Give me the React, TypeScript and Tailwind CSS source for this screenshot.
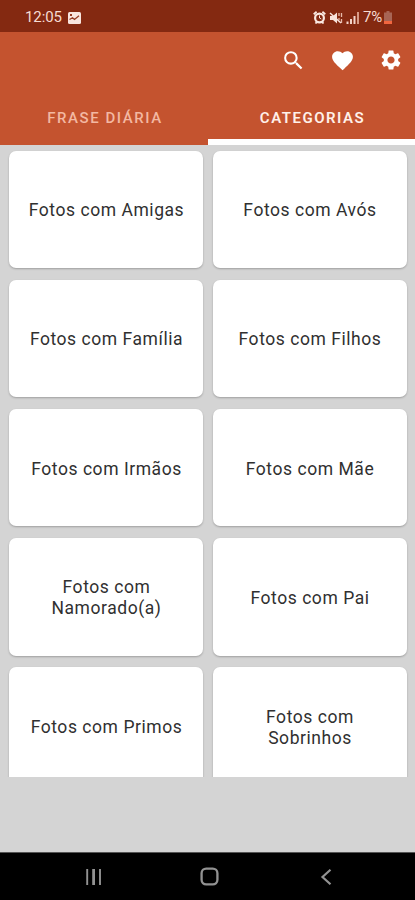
import { MdFavorite, MdSearch, MdSettings } from "react-icons/md";

const categories = [
  "Fotos com Amigas",
  "Fotos com Avós",
  "Fotos com Família",
  "Fotos com Filhos",
  "Fotos com Irmãos",
  "Fotos com Mãe",
  "Fotos com Namorado(a)",
  "Fotos com Pai",
  "Fotos com Primos",
  "Fotos com Sobrinhos",
];

function StatusBar() {
  return (
    <div className="flex h-8 items-center bg-[#842911] pt-[3px] pr-[23px] pl-[25px] text-[#f6dcd3]">
      <span className="w-[38px] text-[15px] leading-none whitespace-nowrap tracking-[-0.1px]">12:05</span>
      <svg className="ml-[5px] h-3 w-[13px]" viewBox="0 0 13 12">
        <rect width="13" height="12" rx="1.5" fill="#f8e5de" />
        <path d="M1.5 7.5l3-1.8 2 1.8 4.5-3.8" fill="none" stroke="#943b23" strokeWidth="1.3" />
        <path d="M2 2h2v2H2z" fill="#943b23" />
      </svg>
      <div className="ml-auto flex items-center">
        <svg className="h-[13px] w-[13px]" viewBox="0 0 13 13" fill="none" stroke="#fae8e1">
          <circle cx="6.5" cy="7" r="4.4" strokeWidth="2.2" />
          <path d="M.7 3.2L3.6.8M9.4.8l2.9 2.4M2.5 12.5l1.3-1.5M10.5 12.5L9.2 11" strokeWidth="1.8" />
          <path d="M6.5 4.5V7l1.8 1" strokeWidth="1" />
        </svg>
        <svg className="ml-[3px] h-3 w-[14px]" viewBox="0 0 14 12">
          <path d="M1 4h3l4-3.5v11L4 8H1z" fill="#f8e3dc" />
          <path d="M1 1l11 10" stroke="#f8e3dc" strokeWidth="1.5" />
          <path d="M10 1v3M10 6v2M12.5 1v4M12.5 7v4" stroke="#e6b9aa" strokeWidth="1.3" />
        </svg>
        <svg className="ml-[3px] h-3 w-[14px]" viewBox="0 0 14 12">
          <path d="M1.5 9.5V12M5 7V12M8.5 4V12" stroke="#f3d3c9" strokeWidth="2" />
          <path d="M12 0v12" stroke="#d99c88" strokeWidth="2" />
        </svg>
        <span className="ml-[3px] w-[20px] text-[15px] leading-none tracking-[-0.3px]">7%</span>
        <svg className="ml-px h-[13px] w-[8px]" viewBox="0 0 8 13">
          <path d="M2.5 0h3v1.5H8V13H0V1.5h2.5z" fill="#a86555" />
          <path d="M0 10h8v3H0z" fill="#f1663f" />
        </svg>
      </div>
    </div>
  );
}

function Header() {
  return (
    <header className="flex h-[113px] flex-col bg-[#c4532f]">
      <div className="flex h-14 items-center justify-end gap-6 pr-3 text-white">
        <MdSearch size={25} />
        <MdFavorite size={25} />
        <MdSettings size={24} />
      </div>
      <nav className="grid h-[57px] grid-cols-[208px_207px] text-center text-[15px] leading-[18px]">
        <div className="pt-[21px] pl-[2px] font-medium tracking-[1.55px] text-[#f3b8a2]">FRASE DIÁRIA</div>
        <div className="border-b-[6px] border-white pt-[21px] pl-[2px] font-semibold tracking-[1.5px] text-[#fff0e9]">CATEGORIAS</div>
      </nav>
    </header>
  );
}

function SystemNavigation() {
  return (
    <div className="flex h-[48px] items-center border-t border-[#555] bg-black text-[#929292]">
      <svg className="ml-[86px] h-4 w-4" viewBox="0 0 16 16" fill="none" stroke="currentColor">
        <path d="M1.2 0v16M14 0v16" strokeWidth="1.9" />
        <path d="M7.6 0v16" strokeWidth="2.8" />
      </svg>
      <svg className="ml-[98px] h-[19px] w-[19px]" viewBox="0 0 18 18" fill="none" stroke="currentColor">
        <rect x="1.5" y="1.5" width="15" height="15" rx="4.4" strokeWidth="2.2" />
      </svg>
      <svg className="ml-[101px] h-4 w-3" viewBox="0 0 12 16" fill="none" stroke="currentColor">
        <path d="M10.5 .8L2.5 8l8 7.2" strokeWidth="2.2" />
      </svg>
    </div>
  );
}

export default function App() {
  return (
    <div className="flex h-[900px] w-[415px] flex-col overflow-hidden bg-[#d4d4d4] font-[Roboto,sans-serif]">
      <StatusBar />
      <Header />
      <main className="h-[632px] overflow-hidden pt-[5.5px]">
        <div className="grid grid-cols-[194px_194px] gap-x-[9.5px] gap-y-[11.7px] pl-[9px]">
          {categories.map((name) => (
            <div
              key={name}
              className="flex h-[117.5px] items-center justify-center rounded-[7px] bg-white px-4 pt-[3px] text-center text-[17.5px] leading-[21px] tracking-[0.55px] text-[#303030] shadow-[0_1px_2px_rgba(0,0,0,0.25)]"
            >
              <span className="max-w-[162px] pl-px">{name}</span>
            </div>
          ))}
        </div>
      </main>
      <div className="flex-1" />
      <SystemNavigation />
    </div>
  );
}
